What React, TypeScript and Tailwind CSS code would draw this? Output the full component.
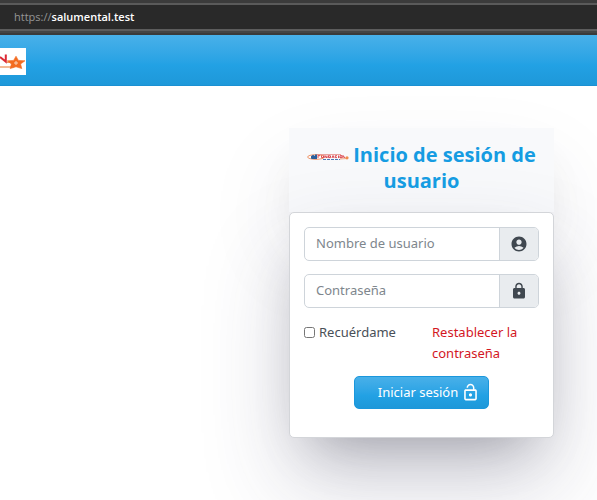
import type { ReactNode } from "react";
import { MdAccountCircle, MdLock, MdLockOpen } from "react-icons/md";

function AddressBar() {
  return (
    <div className="border-b-2 border-[#3a3a3a] bg-[#3b3b3b] pt-[3px]">
      <div className="flex h-7 items-center border-t-2 border-b-2 border-t-[#5a5a5a] border-b-[#5c5c5c] bg-[#292929] px-3.5 font-['Open_Sans',sans-serif] text-[11px] text-white">
        <span className="text-[#969696]">https://</span>
        <span className="font-semibold">salumental.test</span>
      </div>
      <div className="h-0.5 bg-[#444]" />
    </div>
  );
}

// Right-hand end of the foundation logo: the tail of the N and the star.
function NavLogo() {
  return (
    <svg viewBox="0 0 26 27" className="h-[27px] w-[26px] bg-white" aria-hidden="true">
      <path d="M0 9 L5.8 13.6 V6.5" fill="none" stroke="#dc2a35" strokeWidth="2" />
      <path d="M7 14.2 H10 M0 19 H14" fill="none" stroke="#e8782e" strokeWidth="1.2" />
      <path
        d="M16 8.2 L18.4 12.4 L25 12.8 L20.6 16 L21.8 20.6 L16 18.8 L10.2 20.6 L11.4 16 L7.4 12.8 L13.6 12.4 Z"
        fill="#f36c21"
        stroke="#f36c21"
        strokeWidth="0.6"
      />
      <path d="M16 13 V17 M14 15 H18" stroke="#fbd3b8" strokeWidth="1" />
    </svg>
  );
}

function CardLogo() {
  return (
    <svg viewBox="0 0 42 8" className="h-2 w-[42px]" aria-hidden="true">
      <ellipse cx="9" cy="4" rx="8.4" ry="2.3" fill="#fff" stroke="#ed9366" strokeWidth="1" />
      <path d="M4 5.5 V3.2 L6 1.8 L8 3 V1.4 H10 V6 H5 Z" fill="#2b5f9c" />
      <path d="M10 1.5 H34" stroke="#e58a87" strokeWidth="0.8" />
      <path
        d="M11 2.5 V5 M11 2.7 H13 M14.5 2.5 V4.6 H16.5 V2.5 M18 5 V2.5 L20 5 V2.5 M21.5 2.5 V4.6 H23.5 V2.8 H21.5 M25 5 L26 2.5 L27 5 M30 2.7 H28.3 V4.6 H30 M31.5 2.5 V5 M33 5 V2.7 H35 V4.7 H33 M36 5 V2.5 L38 5"
        fill="none"
        stroke="#d9383f"
        strokeWidth="0.9"
      />
      <path d="M16 6.5 H33" stroke="#4b79b4" strokeWidth="1" strokeDasharray="3 1" />
      <path d="M33 6 L40 5.5" stroke="#ed9366" strokeWidth="0.8" />
      <circle cx="40" cy="4.8" r="1.6" fill="#f08b4b" />
    </svg>
  );
}

type FieldProps = {
  id: string;
  label: string;
  type: string;
  icon: ReactNode;
};

function Field({ id, label, type, icon }: FieldProps) {
  return (
    <div className="flex h-[34px] overflow-hidden rounded-[5px] border border-[#ced4da] text-[#404850]">
      <input
        id={id}
        type={type}
        placeholder={label}
        className="min-w-0 flex-1 px-[11px] placeholder:text-[#7e868d] focus:outline-none"
      />
      <label
        htmlFor={id}
        aria-label={label}
        className="flex w-[39px] items-center justify-center border-l border-[#ced4da] bg-[#e9ecef]"
      >
        {icon}
      </label>
    </div>
  );
}

export default function App() {
  return (
    <div className="min-h-screen overflow-hidden bg-white font-['Noto_Sans','Open_Sans',sans-serif] text-[13px] text-[#495057]">
      <AddressBar />
      <nav className="flex h-[51px] items-center border-b border-[#1b90d2] bg-linear-to-b from-[#48b0e9] via-[#22a1e4] via-60% to-[#1e98d9] pt-0.5">
        <NavLogo />
      </nav>

      <main className="flex justify-end pt-[42px] pr-[43px]">
        <section className="w-[265px]">
          <header className="h-[84px] bg-[#f8f9fb] px-3.5 pt-3.5 text-center shadow-[0_44px_88px_0_rgba(50,50,93,0.1),0_26px_52px_-26px_rgba(0,0,0,0.3)]">
            <h1 className="font-['Open_Sans',sans-serif] text-xl leading-[26px] font-bold text-[#159ce2]">
              <span className="mr-1 inline-block align-middle">
                <CardLogo />
              </span>
              Inicio de sesión de usuario
            </h1>
          </header>

          <form
            className="rounded-[5px] border border-[#d3d5d9] bg-white px-3.5 pt-3.5 pb-7 shadow-[0_44px_88px_0_rgba(50,50,93,0.22),0_26px_52px_-26px_rgba(0,0,0,0.3)]"
            onSubmit={(e) => e.preventDefault()}
          >
            <div className="flex flex-col gap-[13px]">
              <Field id="username" label="Nombre de usuario" type="text" icon={<MdAccountCircle size={18} />} />
              <Field id="password" label="Contraseña" type="password" icon={<MdLock size={18} />} />
            </div>

            <div className="mt-3.5 flex items-start leading-[21px]">
              <label className="flex flex-1 items-center gap-1">
                <input type="checkbox" className="size-[11px]" />
                Recuérdame
              </label>
              <a href="#reset" className="w-[107px] text-[#d3171f]">
                Restablecer la contraseña
              </a>
            </div>

            <button
              type="submit"
              className="mx-auto mt-3 flex h-[33px] items-center gap-[3px] rounded-[5px] border border-[#1b97dc] bg-linear-to-b from-[#48b0e9] via-[#22a1e4] via-60% to-[#1e98d9] pr-2 pl-[23px] text-white"
            >
              Iniciar sesión
              <MdLockOpen size={19} />
            </button>
          </form>
        </section>
      </main>
    </div>
  );
}
